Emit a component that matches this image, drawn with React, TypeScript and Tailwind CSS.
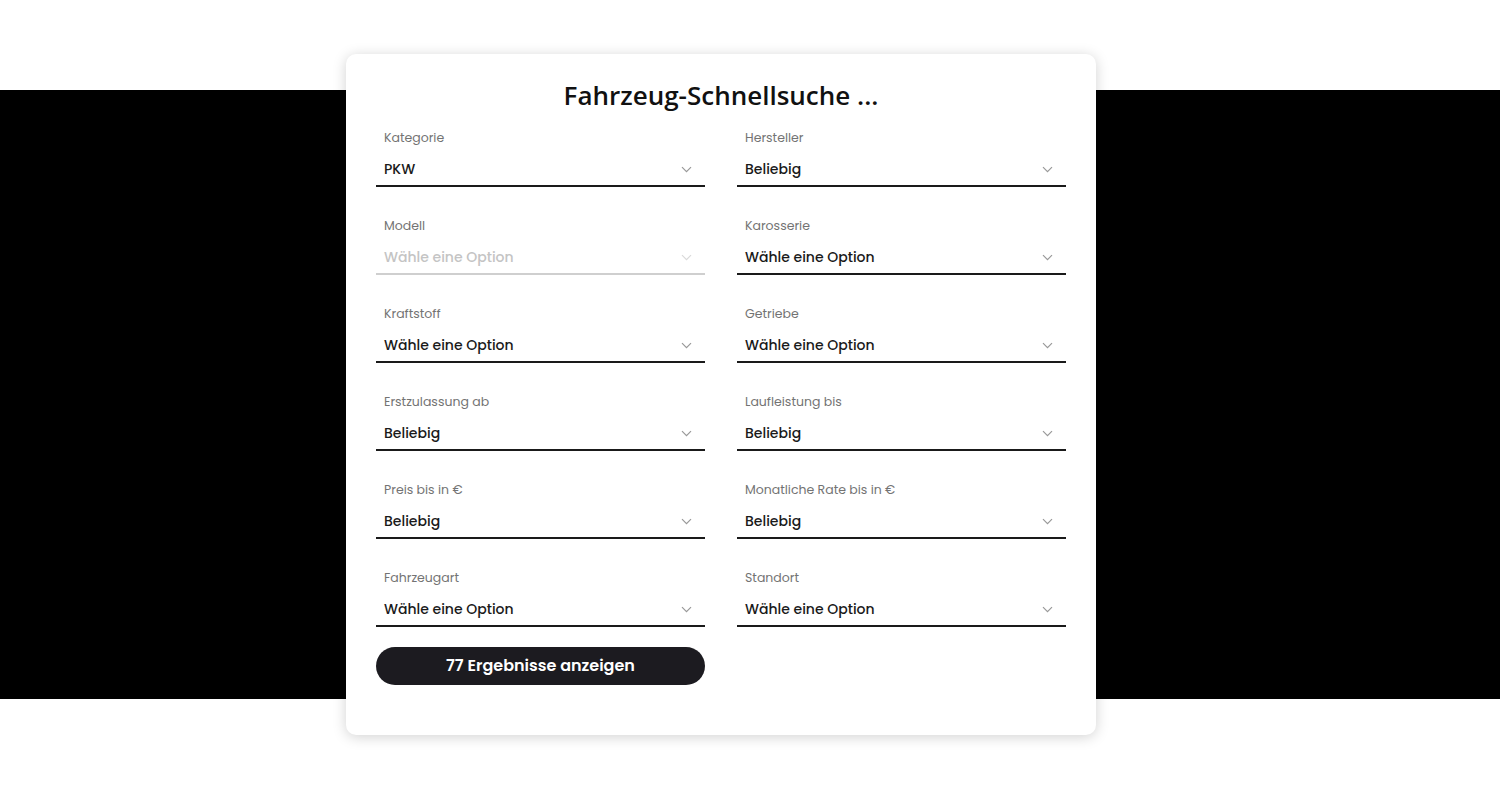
import React from "react";

type Field = { label: string; value: string; disabled?: boolean };

const fields: Field[] = [
  { label: "Kategorie", value: "PKW" },
  { label: "Hersteller", value: "Beliebig" },
  { label: "Modell", value: "Wähle eine Option", disabled: true },
  { label: "Karosserie", value: "Wähle eine Option" },
  { label: "Kraftstoff", value: "Wähle eine Option" },
  { label: "Getriebe", value: "Wähle eine Option" },
  { label: "Erstzulassung ab", value: "Beliebig" },
  { label: "Laufleistung bis", value: "Beliebig" },
  { label: "Preis bis in €", value: "Beliebig" },
  { label: "Monatliche Rate bis in €", value: "Beliebig" },
  { label: "Fahrzeugart", value: "Wähle eine Option" },
  { label: "Standort", value: "Wähle eine Option" },
];

function Chevron({ disabled }: { disabled?: boolean }) {
  return (
    <svg
      width="11"
      height="7"
      viewBox="0 0 11 7"
      fill="none"
      className={disabled ? "text-[#dadada]" : "text-[#999999]"}
    >
      <path d="M1 1.2l4.5 4.5 4.5-4.5" stroke="currentColor" strokeWidth="1.2" />
    </svg>
  );
}

function SelectField({ label, value, disabled }: Field) {
  return (
    <div className="flex flex-col">
      <span className="px-2 text-[12.5px] leading-[18px] text-[#737373]">{label}</span>
      <div
        className={
          "mt-[10px] flex h-[30px] items-center justify-between border-b-2 px-2 pb-[4px] " +
          (disabled ? "border-[#cfcfcf]" : "border-[#1a1a1a]")
        }
      >
        <span
          className={
            "text-[14px] font-medium " + (disabled ? "text-[#c4c4c4]" : "text-[#1a1a1a]")
          }
        >
          {value}
        </span>
        <span className="mr-[5px] flex">
          <Chevron disabled={disabled} />
        </span>
      </div>
    </div>
  );
}

export default function App() {
  return (
    <div
      className="flex h-[800px] w-full pl-[346px] pt-[54px] bg-[linear-gradient(to_bottom,#ffffff_90px,#000000_90px,#000000_699px,#ffffff_699px)]"
      style={{ fontFamily: "'Poppins', 'Noto Sans', sans-serif" }}
    >
      <div className="h-[681px] w-[750px] rounded-[10px] bg-white px-[30px] pt-[23px] shadow-[0_2px_14px_rgba(0,0,0,0.18)]">
        <h1
          className="text-center text-[26px] font-semibold leading-[36px] text-[#111]"
          style={{ fontFamily: "'Open Sans', sans-serif" }}
        >
          Fahrzeug-Schnellsuche ...
        </h1>
        <div className="mt-[16px] grid grid-cols-2 gap-x-8 gap-y-[30px]">
          {fields.map((f) => (
            <SelectField key={f.label} {...f} />
          ))}
        </div>
        <div className="mt-[20px] grid grid-cols-2 gap-x-8">
          <button className="h-[38px] rounded-full bg-[#1c1b20] text-[16px] font-semibold text-white">
            77 Ergebnisse anzeigen
          </button>
        </div>
      </div>
    </div>
  );
}
